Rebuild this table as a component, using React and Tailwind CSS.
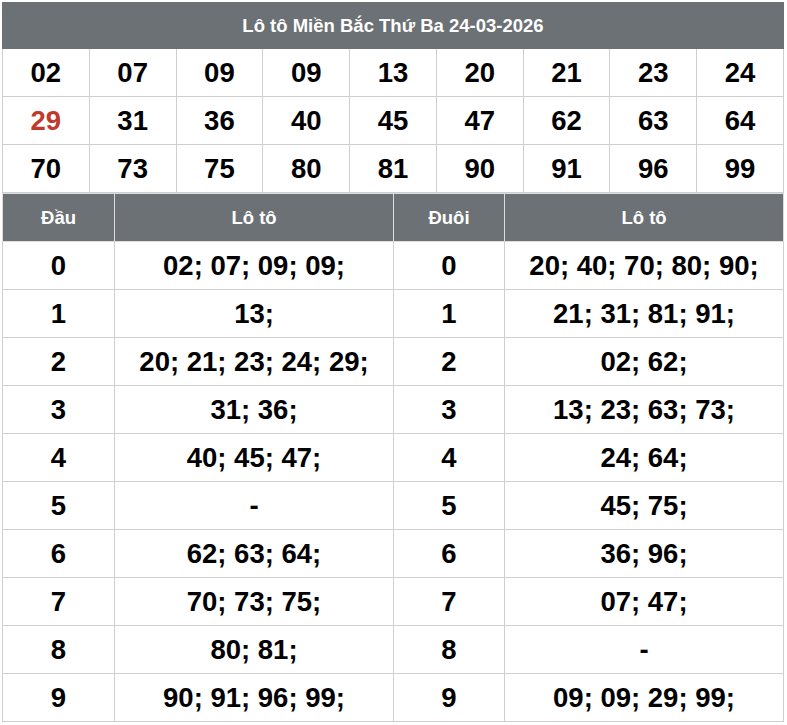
import React from 'react';

const topNumbers = [
  ['02', '07', '09', '09', '13', '20', '21', '23', '24'],
  ['29', '31', '36', '40', '45', '47', '62', '63', '64'],
  ['70', '73', '75', '80', '81', '90', '91', '96', '99'],
];

const rows = [
  ['0', '02; 07; 09; 09;', '0', '20; 40; 70; 80; 90;'],
  ['1', '13;', '1', '21; 31; 81; 91;'],
  ['2', '20; 21; 23; 24; 29;', '2', '02; 62;'],
  ['3', '31; 36;', '3', '13; 23; 63; 73;'],
  ['4', '40; 45; 47;', '4', '24; 64;'],
  ['5', '-', '5', '45; 75;'],
  ['6', '62; 63; 64;', '6', '36; 96;'],
  ['7', '70; 73; 75;', '7', '07; 47;'],
  ['8', '80; 81;', '8', '-'],
  ['9', '90; 91; 96; 99;', '9', '09; 09; 29; 99;'],
];

const font = { fontFamily: '"Liberation Sans", Arial, sans-serif' };

export default function App() {
  return (
    <div className="bg-white w-[787px] h-[725px] pt-[2px] pl-[2px]" style={font}>
      <div className="w-[782px]">
        <table className="w-full table-fixed border-collapse">
          <thead>
            <tr>
              <th
                colSpan={9}
                className="h-[46px] bg-[#6b7174] text-white font-bold text-[18.5px] text-center border border-[#6b7174]"
              >
                Lô tô Miền Bắc Thứ Ba 24-03-2026
              </th>
            </tr>
          </thead>
          <tbody>
            {topNumbers.map((row, i) => (
              <tr key={i}>
                {row.map((n, j) => (
                  <td
                    key={j}
                    className={`h-[48px] border border-[#cfcfcf] text-center font-bold text-[27.5px] ${
                      i === 1 && j === 0 ? 'text-[#c0392b]' : 'text-black'
                    }`}
                  >
                    {n}
                  </td>
                ))}
              </tr>
            ))}
          </tbody>
        </table>

        <table className="w-full table-fixed border-collapse">
          <colgroup>
            <col className="w-[112px]" />
            <col className="w-[279px]" />
            <col className="w-[111px]" />
            <col />
          </colgroup>
          <thead>
            <tr className="bg-[#6b7174] text-white font-bold text-[18.5px]">
              <th className="h-[48px] border border-[#dcdcdc]">Đầu</th>
              <th className="h-[48px] border border-[#dcdcdc]">Lô tô</th>
              <th className="h-[48px] border border-[#dcdcdc]">Đuôi</th>
              <th className="h-[48px] border border-[#dcdcdc]">Lô tô</th>
            </tr>
          </thead>
          <tbody>
            {rows.map((r, i) => (
              <tr key={i} className="text-black font-bold text-[27.5px]">
                {r.map((c, j) => (
                  <td key={j} className="h-[48px] border border-[#cfcfcf] text-center">
                    {c}
                  </td>
                ))}
              </tr>
            ))}
          </tbody>
        </table>
      </div>
    </div>
  );
}
